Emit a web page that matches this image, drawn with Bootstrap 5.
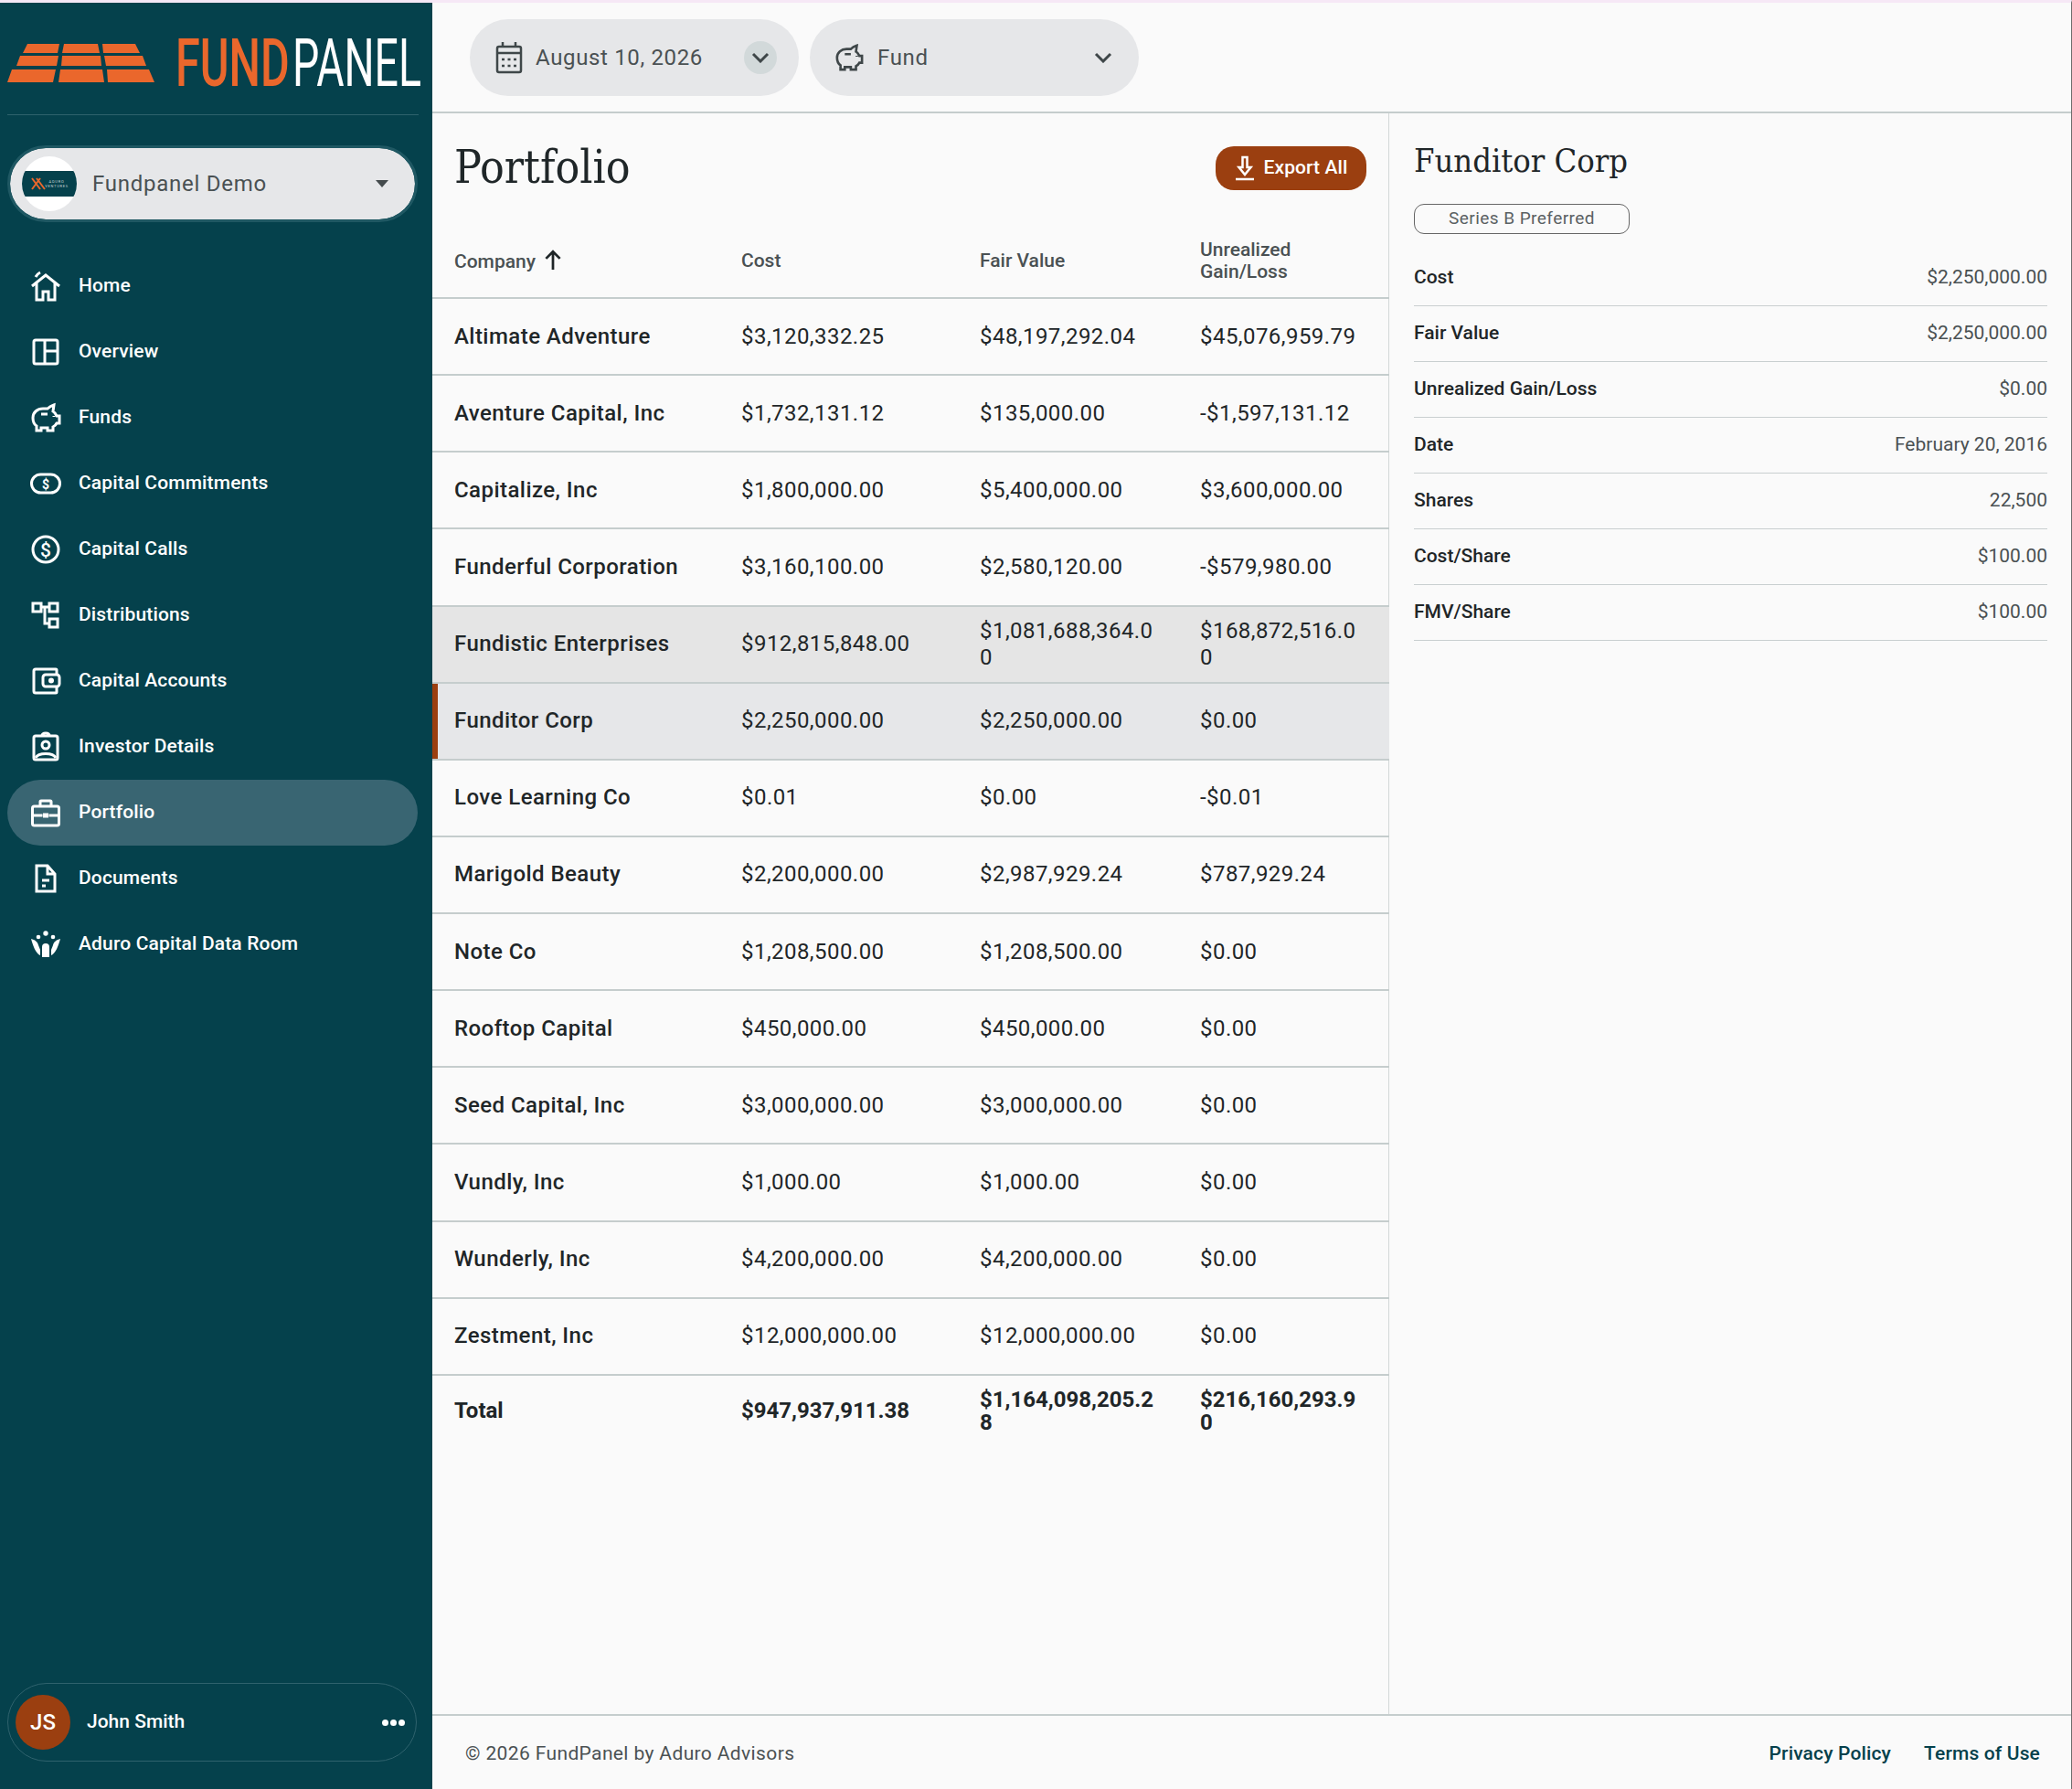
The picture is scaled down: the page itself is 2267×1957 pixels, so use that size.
<!doctype html>
<html lang="en"><head><meta charset="utf-8"><title>Portfolio</title>
<link href="https://cdn.jsdelivr.net/npm/bootstrap@5.3.0/dist/css/bootstrap.min.css" rel="stylesheet">
<style>
html,body{height:100%}
body{background:#fafafa;font-family:Roboto,"Liberation Sans",sans-serif;color:#1f2628;border-top:3px solid #f6e8f6;border-right:1px solid #6c6c6c;overflow:hidden}
.shell{height:1954px}
.side{width:473px;background:#05414c;flex:none}
.brand{height:123px;margin:0 15px 0 8px;border-bottom:1px solid #2e626c}
.brand svg{display:block;padding-top:16px;box-sizing:content-box}
.orgpill{margin:33px 16px 0 8px;height:84px;border:3px solid #1f5863;border-radius:42px;padding:0 0 0 13px;background:#e6e7e9;background-clip:padding-box;color:#4a5153;font-size:24px;letter-spacing:.75px}
.orgava{width:60px;height:60px;border-radius:50%;background:#fff;overflow:hidden;margin-right:17px;flex:none}
.orgcaret{width:0;height:0;border:7.5px solid transparent;border-top:8px solid #444b4d;border-bottom:0;margin-left:auto;margin-right:29px}
.navlist{margin-top:34px}
.navi{height:72px;margin:0 16px 0 8px;padding-left:25px;border-radius:36px;color:#fff;font-size:21px;font-weight:500;letter-spacing:.15px;text-decoration:none}
.navi svg{width:34px;height:34px;flex:none;margin-right:19px;fill:none;stroke:#fff;stroke-width:3}
.navi.on{background:#396572}
.userpill{margin:auto 17px 30px 8px;height:86px;border:1px solid #2f626d;border-radius:43px;padding-left:8px;color:#fff;font-size:21px;font-weight:500}
.uava{width:60px;height:60px;border-radius:50%;background:#9b3f10;font-size:24px;margin-right:18px}
.udots{margin-left:auto;margin-right:12px;gap:2px}
.udots i{width:7px;height:7px;border-radius:50%;background:#fff;display:block}
.topbar{height:121px;border-bottom:2px solid #c5cdcd;padding:18px 0 0 41px;gap:12px}
.filt{width:360px;height:84px;border-radius:42px;background:#e6e7e9;color:#4a5153;font-size:24px;letter-spacing:.65px;padding-left:27px}
.filt svg.ic{width:32px;height:36px;margin-right:13px;flex:none}
.fundpill svg.ic{margin-right:15px}
.chv{width:36px;height:36px;border-radius:50%;margin-left:auto;margin-right:24px}
.fundpill .chv{margin-right:21px}
.chv.tint{background:#d2d9da}
.leftcol{width:1047px;flex:none;border-right:1px solid #d3d8d8}
.pagehead{height:120px;padding:0 24px}
.ptitle{font-family:"DejaVu Serif Condensed","DejaVu Serif","Liberation Serif",serif;font-size:49.5px;margin:0;color:#1f2628}
.exp{height:48px;width:165px;border-radius:20px;background:#9b3f10;border:0;color:#fff;font-size:21px;font-weight:500;letter-spacing:.1px;padding:0;gap:10px}
.ptable{table-layout:fixed;width:1047px;margin:0;border-collapse:separate;border-spacing:0;--bs-table-bg:transparent}
.ptable th{font-weight:500;font-size:21px;line-height:24px;color:#4a5153;height:83px;padding:0 0 0 24px;vertical-align:middle;border-bottom:2px solid #c5cdcd}
.ptable th svg{margin-left:3px;vertical-align:-3px}
.ptable td{height:84.13px;padding:0 24px;vertical-align:middle;font-size:24px;line-height:29px;letter-spacing:.45px;color:#1f2628;border-bottom:2px solid #c5cdcd;word-break:break-all}
.ptable td:first-child{font-weight:500;word-break:normal}
.ptable tr.hov td{background:#e5e5e5}
.ptable tr.sel td{background:#e6e7e9}
.ptable tr.sel td:first-child{box-shadow:inset 6px 0 0 #9b3f10}
.ptable tr.tot td{font-weight:700;border-bottom:0;height:78px;line-height:25px;letter-spacing:0}
.rpanel{padding:29px 26px 0 27px}
.rtitle{font-family:"DejaVu Serif Condensed","DejaVu Serif","Liberation Serif",serif;font-size:36px;margin:0;color:#1f2628;line-height:46px}
.pillb{width:236px;height:33px;border:1px solid #666;border-radius:11px;font-size:19px;color:#5a6163;margin-top:24px;margin-bottom:18px;letter-spacing:.45px}
.kv{height:61px;border-bottom:1px solid #c9cfd0;font-size:21px}
.kv b{font-weight:500;color:#1f2628}
.kv span{color:#4a5153}
.foot{height:82px;border-top:2px solid #c5cdcd;padding:3px 34px 0 36px;font-size:21px;color:#4a5153;letter-spacing:.37px}
.foot a{color:#05414c;font-weight:500;text-decoration:none;letter-spacing:.15px;margin-left:36px}
</style></head>
<body>
<svg width="0" height="0" class="position-absolute"><defs>
<symbol id="i-home" viewBox="0 0 34 34"><path d="M2 17 17 5l15 12M7 14v18h7v-9h6v9h7V14M6 7c1-2 3-4 5-5"/></symbol>
<symbol id="i-over" viewBox="0 0 34 34"><rect x="4" y="4" width="26" height="26" rx="2"/><path d="M16 4v26M16 16h14"/></symbol>
<symbol id="i-pig" viewBox="0 0 34 34"><path d="M3 17c0-6 5-10 11-10h5c2-2 4-3 7-4l-1 7c2 1 3 3 4 5h3v8h-3c-1 2-2 3-4 4v4h-6v-3h-7v3H7v-5c-3-2-4-6-4-9Z"/><path d="M12 13h7M26 15v1"/></symbol>
<symbol id="i-cash" viewBox="0 0 34 34"><rect x="1.500" y="7" width="31" height="20" rx="10"/><text x="17" y="22.500" text-anchor="middle" font-size="14" font-weight="700" fill="#fff" stroke="none" font-family="Roboto">$</text></symbol>
<symbol id="i-dollar" viewBox="0 0 34 34"><circle cx="17" cy="17" r="14"/><text x="17" y="24.500" text-anchor="middle" font-size="21" font-weight="500" fill="#fff" stroke="none" font-family="Roboto">$</text></symbol>
<symbol id="i-dist" viewBox="0 0 34 34"><rect x="3" y="4" width="9" height="9"/><rect x="21" y="4" width="9" height="9"/><rect x="21" y="21" width="9" height="9"/><path d="M12 8h9M16 8v18h5"/></symbol>
<symbol id="i-wallet" viewBox="0 0 34 34"><path d="M29 10V5a1 1 0 0 0-1-1H6a2 2 0 0 0-2 2v22a2 2 0 0 0 2 2h22a1 1 0 0 0 1-1v-5"/><rect x="14" y="10" width="18" height="13" rx="3"/><circle cx="23" cy="16.500" r="1.500" fill="#fff"/></symbol>
<symbol id="i-badge" viewBox="0 0 34 34"><rect x="4" y="5" width="26" height="26" rx="2"/><path d="M13 5c0-4 8-4 8 0"/><circle cx="17" cy="15" r="4"/><path d="M6 29c3-6 19-6 22 0"/></symbol>
<symbol id="i-brief" viewBox="0 0 34 34"><rect x="2.500" y="10" width="29" height="21" rx="2"/><path d="M11 10V5a1 1 0 0 1 1-1h10a1 1 0 0 1 1 1v5M2.500 20h11M20.500 20h11"/><rect x="14" y="17.500" width="6" height="5" fill="#fff" stroke="none"/></symbol>
<symbol id="i-doc" viewBox="0 0 34 34"><path d="M7 3h12l8 9v19H7ZM19 3v9h8M13 19h8M13 25h4"/></symbol>
<symbol id="i-people" viewBox="0 0 34 34"><g fill="#fff" stroke="none"><circle cx="17" cy="5" r="2.700"/><circle cx="9" cy="9" r="2.300"/><circle cx="25" cy="9" r="2.300"/><path d="M13 20a4 4 0 0 1 8 0v11h-8Z"/><path d="M1 11c4 1 7 3 8 7l2 5v6C6 27 3 18 1 11ZM33 11c-4 1-7 3-8 7l-2 5v6c5-2 8-11 10-18Z"/></g></symbol>
</defs></svg>
<div class="shell d-flex">
<aside class="side d-flex flex-column">
<div class="brand">
<svg width="460" height="84" viewBox="0 -20 460 84">
<g fill="#ea672c"><path d="M22 9H57L55 19H17ZM62 9H99L101 19H60ZM104 9H140L145 19H105ZM14 22H56L54 33H10ZM60 22H102L103 33H59ZM106 22H148L152 33H108ZM5 37H53L50 51H0ZM58 37H104L106 51H56ZM109 37H155L161 51H110Z"/></g>
<text transform="translate(184 55) scale(.675 1)" font-family="Roboto" font-size="72" font-weight="500" fill="#ea672c">FUND</text>
<text transform="translate(312 55) scale(.645 1)" font-family="Roboto" font-size="72" font-weight="400" fill="#fff">PANEL</text>
</svg></div>
<div class="orgpill d-flex align-items-center">
<div class="orgava d-flex align-items-center"><svg width="60" height="28" viewBox="0 0 60 28"><rect width="60" height="28" fill="#05414c"/><path d="M11 8l9 12M16 8l9 12M11 20l9-12" stroke="#ea672c" stroke-width="2"/><text x="38" y="13" text-anchor="middle" font-size="4" fill="#c8d4d6" font-family="Roboto">ADURO</text><text x="38" y="18" text-anchor="middle" font-size="4" fill="#c8d4d6" font-family="Roboto">VENTURES</text></svg></div>
<span>Fundpanel Demo</span><span class="orgcaret"></span></div>
<nav class="navlist d-flex flex-column">
<a class="navi d-flex align-items-center" href="#"><svg><use href="#i-home"/></svg>Home</a>
<a class="navi d-flex align-items-center" href="#"><svg><use href="#i-over"/></svg>Overview</a>
<a class="navi d-flex align-items-center" href="#"><svg><use href="#i-pig"/></svg>Funds</a>
<a class="navi d-flex align-items-center" href="#"><svg><use href="#i-cash"/></svg>Capital Commitments</a>
<a class="navi d-flex align-items-center" href="#"><svg><use href="#i-dollar"/></svg>Capital Calls</a>
<a class="navi d-flex align-items-center" href="#"><svg><use href="#i-dist"/></svg>Distributions</a>
<a class="navi d-flex align-items-center" href="#"><svg><use href="#i-wallet"/></svg>Capital Accounts</a>
<a class="navi d-flex align-items-center" href="#"><svg><use href="#i-badge"/></svg>Investor Details</a>
<a class="navi on d-flex align-items-center" href="#"><svg><use href="#i-brief"/></svg>Portfolio</a>
<a class="navi d-flex align-items-center" href="#"><svg><use href="#i-doc"/></svg>Documents</a>
<a class="navi d-flex align-items-center" href="#"><svg><use href="#i-people"/></svg>Aduro Capital Data Room</a>
</nav>
<div class="userpill d-flex align-items-center"><div class="uava d-flex align-items-center justify-content-center">JS</div><span>John Smith</span><div class="udots d-flex"><i></i><i></i><i></i></div></div>
</aside>
<main class="flex-grow-1 d-flex flex-column">
<div class="topbar d-flex">
<div class="filt d-flex align-items-center"><svg class="ic" viewBox="0 0 32 36" fill="none" stroke="#3f4749" stroke-width="2.500"><rect x="3" y="6" width="26" height="28" rx="2"/><path d="M3 13h26M9 1v6M23 1v6"/><path stroke-dasharray="3 3.500" d="M8 20h17M8 27h17"/></svg><span>August 10, 2026</span><span class="chv tint d-flex align-items-center justify-content-center"><svg width="20" height="12" viewBox="0 0 20 12" fill="none" stroke="#3f4749" stroke-width="3"><path d="M2 2l8 8 8-8"/></svg></span></div>
<div class="filt fundpill d-flex align-items-center"><svg class="ic" viewBox="0 0 34 34" fill="none" stroke="#3f4749" stroke-width="2.800"><use href="#i-pig"/></svg><span>Fund</span><span class="chv d-flex align-items-center justify-content-center"><svg width="20" height="12" viewBox="0 0 20 12" fill="none" stroke="#3f4749" stroke-width="3"><path d="M2 2l8 8 8-8"/></svg></span></div>
</div>
<div class="d-flex flex-grow-1">
<section class="leftcol">
<div class="pagehead d-flex align-items-center justify-content-between">
<h1 class="ptitle">Portfolio</h1>
<button class="exp btn d-flex align-items-center justify-content-center"><svg width="22" height="28" viewBox="0 0 22 28" fill="none" stroke="#fff" stroke-width="2.500"><path d="M8.500 2h5v11h4l-6.500 8-6.500-8h4ZM1 26h20"/></svg>Export All</button>
</div>
<table class="ptable table">
<colgroup><col style="width:314px"><col style="width:261px"><col style="width:241px"><col style="width:231px"></colgroup>
<thead><tr><th>Company <svg width="22" height="24" viewBox="0 0 20 22" fill="none" stroke="#1f2628" stroke-width="2.500"><path d="M10 21V3M3 10l7-7 7 7"/></svg></th><th>Cost</th><th>Fair Value</th><th>Unrealized<br>Gain/Loss</th></tr></thead>
<tbody>
<tr><td>Altimate Adventure</td><td>$3,120,332.25</td><td>$48,197,292.04</td><td>$45,076,959.79</td></tr>
<tr><td>Aventure Capital, Inc</td><td>$1,732,131.12</td><td>$135,000.00</td><td>-$1,597,131.12</td></tr>
<tr><td>Capitalize, Inc</td><td>$1,800,000.00</td><td>$5,400,000.00</td><td>$3,600,000.00</td></tr>
<tr><td>Funderful Corporation</td><td>$3,160,100.00</td><td>$2,580,120.00</td><td>-$579,980.00</td></tr>
<tr class="hov"><td>Fundistic Enterprises</td><td>$912,815,848.00</td><td>$1,081,688,364.00</td><td>$168,872,516.00</td></tr>
<tr class="sel"><td>Funditor Corp</td><td>$2,250,000.00</td><td>$2,250,000.00</td><td>$0.00</td></tr>
<tr><td>Love Learning Co</td><td>$0.01</td><td>$0.00</td><td>-$0.01</td></tr>
<tr><td>Marigold Beauty</td><td>$2,200,000.00</td><td>$2,987,929.24</td><td>$787,929.24</td></tr>
<tr><td>Note Co</td><td>$1,208,500.00</td><td>$1,208,500.00</td><td>$0.00</td></tr>
<tr><td>Rooftop Capital</td><td>$450,000.00</td><td>$450,000.00</td><td>$0.00</td></tr>
<tr><td>Seed Capital, Inc</td><td>$3,000,000.00</td><td>$3,000,000.00</td><td>$0.00</td></tr>
<tr><td>Vundly, Inc</td><td>$1,000.00</td><td>$1,000.00</td><td>$0.00</td></tr>
<tr><td>Wunderly, Inc</td><td>$4,200,000.00</td><td>$4,200,000.00</td><td>$0.00</td></tr>
<tr><td>Zestment, Inc</td><td>$12,000,000.00</td><td>$12,000,000.00</td><td>$0.00</td></tr>
<tr class="tot"><td>Total</td><td>$947,937,911.38</td><td>$1,164,098,205.28</td><td>$216,160,293.90</td></tr>
</tbody></table>
</section>
<section class="rpanel flex-grow-1">
<h2 class="rtitle">Funditor Corp</h2>
<div class="pillb d-flex align-items-center justify-content-center">Series B Preferred</div>
<div class="kv d-flex align-items-center justify-content-between"><b>Cost</b><span>$2,250,000.00</span></div>
<div class="kv d-flex align-items-center justify-content-between"><b>Fair Value</b><span>$2,250,000.00</span></div>
<div class="kv d-flex align-items-center justify-content-between"><b>Unrealized Gain/Loss</b><span>$0.00</span></div>
<div class="kv d-flex align-items-center justify-content-between"><b>Date</b><span>February 20, 2016</span></div>
<div class="kv d-flex align-items-center justify-content-between"><b>Shares</b><span>22,500</span></div>
<div class="kv d-flex align-items-center justify-content-between"><b>Cost/Share</b><span>$100.00</span></div>
<div class="kv d-flex align-items-center justify-content-between"><b>FMV/Share</b><span>$100.00</span></div>
</section>
</div>
<footer class="foot d-flex align-items-center"><span>© 2026 FundPanel by Aduro Advisors</span><span class="ms-auto"><a href="#">Privacy Policy</a><a href="#">Terms of Use</a></span></footer>
</main>
</div>
<script src="https://cdn.jsdelivr.net/npm/bootstrap@5.3.0/dist/js/bootstrap.bundle.min.js"></script>
</body></html>
